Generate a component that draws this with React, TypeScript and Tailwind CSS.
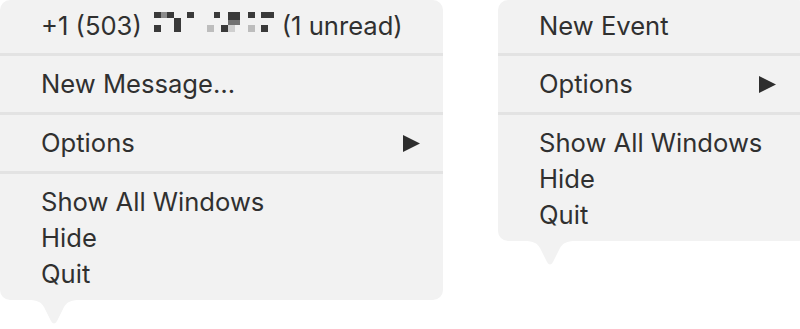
const font = { fontFamily: 'Inter, "Liberation Sans", sans-serif' };

// pixelated phone number blocks [x, y, w, h, color]
const blocks: [number, number, number, number, string][] = [
  [0, 0, 7, 6, '#3a3a3a'],
  [7, 0, 6, 6, '#8a8a8a'],
  [13, 0, 7, 6, '#3a3a3a'],
  [20, 6, 7, 14, '#3a3a3a'],
  [33, 0, 7, 6, '#3a3a3a'],
  [0, 13, 7, 7, '#3a3a3a'],
  [53, 13, 7, 7, '#bdbdbd'],
  [60, 0, 6, 6, '#3a3a3a'],
  [74, 0, 12, 8, '#3a3a3a'],
  [74, 8, 12, 5, '#727272'],
  [94, 0, 7, 6, '#3a3a3a'],
  [107, 0, 13, 6, '#3a3a3a'],
  [67, 13, 7, 7, '#3a3a3a'],
  [74, 13, 7, 7, '#cfcfcf'],
  [94, 13, 7, 7, '#bdbdbd'],
  [107, 13, 7, 7, '#3a3a3a'],
];

const Sep = () => <div className="h-[3px] bg-[#e3e3e3]" />;

const Arrow = () => (
  <svg width="17" height="17" viewBox="0 0 17 17" className="shrink-0">
    <path d="M0 0 L17 8.5 L0 17 Z" fill="#2e2e2e" />
  </svg>
);

const Tail = ({ className }: { className: string }) => (
  <svg width="50" height="25" viewBox="0 0 50 25" className={`absolute top-full ${className}`}>
    <path
      d="M0 0 C8 0 12 2 15 7 L22 21 Q25 26 28 21 L35 7 C38 2 42 0 50 0 Z"
      fill="#f2f2f2"
    />
  </svg>
);

const Row = ({ h, children }: { h: string; children: React.ReactNode }) => (
  <div className={`${h} flex items-center pl-[41px] pr-[23px]`}>{children}</div>
);

const BottomGroup = () => (
  <div className="pt-[10px] pb-[8px]">
    {['Show All Windows', 'Hide', 'Quit'].map((t) => (
      <div key={t} className="h-[36px] leading-[36px] pl-[41px]">
        {t}
      </div>
    ))}
  </div>
);

export default function App() {
  return (
    <div
      className="w-[800px] h-[329px] bg-white overflow-hidden flex items-start text-[25.6px] text-[#303030]"
      style={font}
    >
      {/* Messages dock menu */}
      <div className="relative w-[443px] bg-[#f2f2f2] rounded-[10px] shrink-0">
        <Row h="h-[53px]">
          <span>+1 (503)</span>
          <svg width="120" height="20" viewBox="0 0 120 20" className="ml-[12px] mr-[8px] mb-[9px] shrink-0">
            {blocks.map(([x, y, w, hh, c], i) => (
              <rect key={i} x={x} y={y} width={w} height={hh} fill={c} />
            ))}
          </svg>
          <span>(1 unread)</span>
        </Row>
        <Sep />
        <Row h="h-[56px]">New Message…</Row>
        <Sep />
        <Row h="h-[56px]">
          <span className="flex-1">Options</span>
          <Arrow />
        </Row>
        <Sep />
        <BottomGroup />
        <Tail className="left-[29px]" />
      </div>

      {/* Calendar dock menu */}
      <div className="relative ml-[55px] w-[310px] bg-[#f2f2f2] rounded-[10px] shrink-0">
        <Row h="h-[53px]">New Event</Row>
        <Sep />
        <Row h="h-[56px]">
          <span className="w-[220px]">Options</span>
          <Arrow />
        </Row>
        <Sep />
        <BottomGroup />
        <Tail className="left-[27px]" />
      </div>
    </div>
  );
}
